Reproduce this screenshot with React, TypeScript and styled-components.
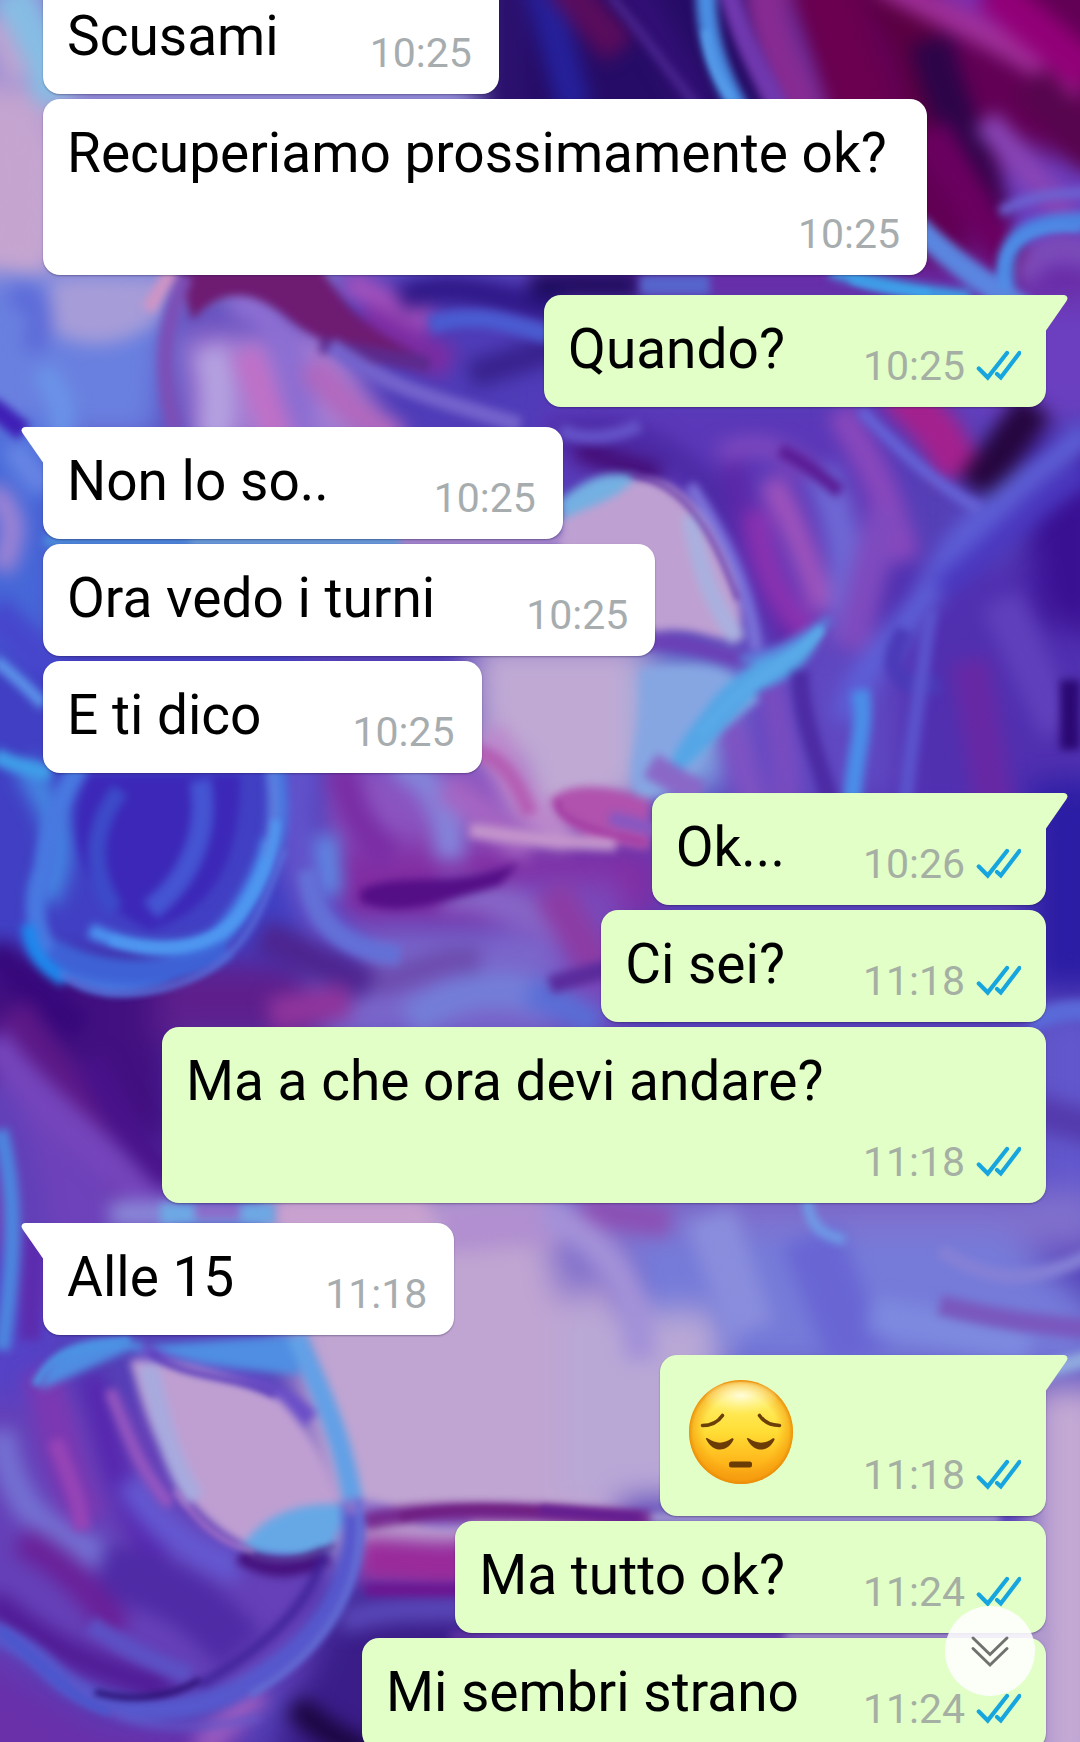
import React from 'react';
import styled, { createGlobalStyle, css } from 'styled-components';

const GlobalStyle = createGlobalStyle`
  *, *::before, *::after { box-sizing: border-box; }
  body {
    margin: 0;
    background: #4a35b5;
    font-family: Roboto, "Noto Sans", sans-serif;
  }
`;

const Screen = styled.main`
  position: relative;
  height: 100vh;
  overflow: hidden;
`;

const Wallpaper = styled.svg`
  position: absolute;
  inset: 0;
  width: 100%;
  height: 100%;
`;

/* The history is scrolled, so the first message is cut by the top edge. */
const History = styled.ol`
  position: relative;
  display: flex;
  flex-direction: column;
  gap: 5px;
  list-style: none;
  margin: -18px 0 0;
  padding: 0 34px 0 43px;
`;

const Row = styled.li<{ $mine?: boolean; $first?: boolean }>`
  display: flex;
  justify-content: ${(p) => (p.$mine ? 'flex-end' : 'flex-start')};
  margin-top: ${(p) => (p.$first ? 15 : 0)}px;
`;

const gaps = { tight: 64, normal: 78, wide: 91, wider: 105 };
type Gap = keyof typeof gaps;

const Bubble = styled.div<{ $mine?: boolean; $first?: boolean; $gap: Gap }>`
  position: relative;
  display: flex;
  flex-wrap: wrap;
  align-items: flex-end;
  gap: 16px ${(p) => gaps[p.$gap]}px;
  max-width: 884px;
  padding: 22px ${(p) => (p.$mine ? 25 : 27)}px 17px 24px;
  border-radius: 17px;
  background: ${(p) => (p.$mine ? '#e1ffc7' : '#ffffff')};
  color: ${(p) => (p.$mine ? '#e1ffc7' : '#ffffff')};
  box-shadow: 0 1px 2px rgba(20, 10, 50, 0.35);
  ${(p) =>
    p.$first &&
    (p.$mine
      ? css`
          border-top-right-radius: 0;
        `
      : css`
          border-top-left-radius: 0;
        `)}
`;

const Tail = styled.svg<{ $mine?: boolean }>`
  position: absolute;
  top: 0;
  ${(p) => (p.$mine ? 'right: -22px;' : 'left: -22px; transform: scaleX(-1);')}
  width: 23px;
  height: 36px;
`;

const Message = styled.p`
  margin: 0 0 9px;
  font-size: 55px;
  line-height: 64px;
  color: #000;
`;

const Emoji = styled.svg`
  display: block;
  width: 115px;
  height: 113px;
  margin-bottom: 9px;
`;

const Meta = styled.div`
  display: flex;
  align-items: center;
  gap: 11px;
  margin-left: auto;
`;

const Time = styled.time<{ $mine?: boolean }>`
  font-size: 41px;
  line-height: 48px;
  color: ${(p) => (p.$mine ? '#a5afa3' : '#a7adaf')};
`;

const Ticks = styled.svg`
  display: block;
  width: 45px;
  height: 32px;
`;

const ScrollDown = styled.button`
  position: absolute;
  right: 45px;
  bottom: 46px;
  display: flex;
  align-items: center;
  justify-content: center;
  width: 90px;
  height: 90px;
  padding: 0;
  border: 0;
  border-radius: 50%;
  background: rgba(255, 255, 255, 0.88);
  cursor: pointer;
`;

type Stroke = { d: string; c: string; w?: number };

const washes: Stroke[] = [
  { d: 'M-40 -40H560V300H-40Z', c: '#8e86d4' },
  { d: 'M-60 80H60V270H-60Z', c: '#c4a4d0' },
  { d: 'M480 -40H780V140H480Z', c: '#260c66' },
  { d: 'M790 -40H1120V280H900Z', c: '#620055' },
  { d: 'M1000 150L1120 160V420H960Z', c: '#6b3fc0' },
  { d: 'M-40 270H175L160 440H-40Z', c: '#6a80e0' },
  { d: 'M180 330H340L400 450H190Z', c: '#a57fd4' },
  { d: 'M330 260H560V440H380Z', c: '#4f3cb8' },
  { d: 'M540 260H1100V300H540Z', c: '#6b2aa4' },
  { d: 'M-40 430H60V700H-40Z', c: '#4668d8' },
  { d: 'M-40 650H300V960H-40Z', c: '#4140c4' },
  { d: 'M540 400H900V620H740L640 480H540Z', c: '#5b38b8' },
  { d: 'M860 560H1100V820H860Z', c: '#5130b0' },
  { d: 'M1010 440H1110V640L1040 620Z', c: '#3a1092' },
  { d: 'M740 640H900V800H700Z', c: '#6048c2' },
  { d: 'M470 640H650L640 800L560 830H480Z', c: '#c0aad4' },
  { d: 'M640 660H740L720 790H640Z', c: '#83a9e2' },
  { d: 'M330 760H520V850H330Z', c: '#8b54c0' },
  { d: 'M330 845H660V920H330Z', c: '#832da2' },
  { d: 'M500 880H620V1030H500Z', c: '#7a4bbc' },
  { d: 'M1030 780H1110V990H1030Z', c: '#2b1da4' },
  { d: 'M1030 1010H1110V1240H1030Z', c: '#6257cc' },
  { d: 'M-60 960H170L180 1150H40L-60 1040Z', c: '#421080' },
  { d: 'M160 960H300L330 1040H150Z', c: '#5e1f8c' },
  { d: 'M320 930H560V1040H320Z', c: '#7b68cc' },
  { d: 'M-40 1080L60 1080L180 1200V1250H-40Z', c: '#6e42ba' },
  { d: 'M-40 1250H60V1400H-40Z', c: '#5542c6' },
  { d: 'M260 1195H620V1560H330Z', c: '#c0a5d2' },
  { d: 'M540 1190H1100V1250H700L560 1300Z', c: '#8170cc' },
  { d: 'M640 1230H1000L1100 1310V1370H620Z', c: '#767bd9' },
  { d: 'M560 1310H720V1500H560Z', c: '#b9a8d6' },
  { d: 'M1030 1385H1110V1780H1030Z', c: '#c3a9d3' },
  { d: 'M-40 1400H150L250 1550L340 1560L300 1680L120 1700L-40 1640Z', c: '#6540b8' },
  { d: 'M-40 1640L100 1720L240 1730V1780H-40Z', c: '#6930aa' },
  { d: 'M340 1590H480V1780H260L300 1690Z', c: '#3a1d88' },
];

/* Wide, soft folds of ink. */
const folds: Stroke[] = [
  { d: 'M10 -10L60 100', c: '#86bde4', w: 44 },
  { d: 'M-10 20L20 80', c: '#bba3d2', w: 26 },
  { d: 'M0 110L50 150L44 270L-20 260', c: '#c5a5d0' },
  { d: 'M50 280C90 270 130 280 165 275L160 320C120 350 80 350 50 330Z', c: '#a69cd8' },
  { d: 'M10 300C40 290 50 320 30 350', c: '#5c6ad8', w: 24 },
  { d: 'M40 370C60 390 66 410 60 440', c: '#6a94e8', w: 24 },
  { d: 'M230 300C270 300 300 350 300 440', c: '#8c6ed2', w: 34 },
  { d: 'M210 350C220 380 220 400 215 440', c: '#b4a2e0', w: 30 },
  { d: 'M246 350L280 440', c: '#c070c6', w: 30 },
  { d: 'M310 365C340 400 360 420 400 440', c: '#b268bd', w: 30 },
  { d: 'M345 280L430 325', c: '#a352bc', w: 28 },
  { d: 'M360 318L450 365', c: '#7c2ca2', w: 34 },
  { d: 'M400 300C450 275 500 300 560 310', c: '#2d1684', w: 26 },
  { d: 'M470 375L580 340', c: '#37218c', w: 28 },
  { d: 'M515 -20V110', c: '#2c1170', w: 24 },
  { d: 'M540 -20L575 110', c: '#25209a', w: 34 },
  { d: 'M560 -20L620 50', c: '#5a0c5c', w: 38 },
  { d: 'M630 -20L700 110', c: '#310f74', w: 34 },
  { d: 'M765 -20C765 30 785 70 805 120', c: '#872b92', w: 46 },
  { d: 'M820 -20L865 120', c: '#6a004f', w: 62 },
  { d: 'M880 -20C920 30 930 70 935 130', c: '#5a0042', w: 50 },
  { d: 'M880 -20C950 20 1010 40 1080 92', c: '#a0309a', w: 26 },
  { d: 'M940 -20L1030 30', c: '#7e2fb0', w: 26 },
  { d: 'M990 -10L1090 75', c: '#920078', w: 42 },
  { d: 'M930 40C950 120 975 160 990 225', c: '#2d0448', w: 42 },
  { d: 'M930 130L1020 280', c: '#6a0060', w: 38 },
  { d: 'M985 120L1070 220', c: '#8945b6', w: 28 },
  { d: 'M1030 80L1100 160', c: '#57054e', w: 42 },
  { d: 'M530 285H640', c: '#1c0c5c', w: 26 },
  { d: 'M1020 280C1040 240 1060 245 1100 255', c: '#7d4cb8', w: 26 },
  { d: 'M10 445L46 490', c: '#6886e4', w: 28 },
  { d: 'M-10 490C14 510 20 530 0 570', c: '#a084d4', w: 24 },
  { d: 'M-10 610L50 670', c: '#4646cc', w: 40 },
  { d: 'M550 440C640 410 700 470 750 540', c: '#4d2ba6', w: 30 },
  { d: 'M575 450L660 476', c: '#430a70', w: 22 },
  { d: 'M730 450C745 540 770 600 795 660', c: '#5b28a8', w: 26 },
  { d: 'M755 510C765 580 785 610 815 640', c: '#8c32b0', w: 26 },
  { d: 'M770 480C795 520 805 560 825 610', c: '#a054bc', w: 26 },
  { d: 'M720 455C770 430 800 460 850 510', c: '#7c48be', w: 22 },
  { d: 'M840 410C870 460 890 500 905 560', c: '#8a48bc', w: 30 },
  { d: 'M820 470C850 540 850 580 845 640', c: '#6e68d4', w: 34 },
  { d: 'M885 510L850 650', c: '#7f4abe', w: 36 },
  { d: 'M895 385C925 420 945 430 960 475', c: '#a4218e', w: 46 },
  { d: 'M975 490L1035 405', c: '#26063e', w: 40 },
  { d: 'M1090 430C1030 480 960 520 930 590C900 640 860 660 845 720', c: '#5d5fd6', w: 28 },
  { d: 'M1090 470C1040 500 1000 540 940 590', c: '#4a38c0', w: 24 },
  { d: 'M770 680C780 740 790 770 785 810', c: '#7a4cc0', w: 28 },
  { d: 'M970 660L995 810', c: '#6828a4', w: 38 },
  { d: 'M1000 600L1060 730', c: '#6140bc', w: 40 },
  { d: 'M730 720L755 810', c: '#7f52c2', w: 30 },
  { d: 'M490 730C510 770 510 800 570 838', c: '#bd88cc', w: 30 },
  { d: 'M395 760C430 780 450 800 450 860', c: '#8484da', w: 30 },
  { d: 'M340 765C350 810 360 830 390 860', c: '#7a2da4', w: 32 },
  { d: 'M445 785L530 850', c: '#a565c2', w: 32 },
  { d: 'M25 765C60 820 70 850 45 900', c: '#4587e2', w: 26 },
  { d: 'M300 760C290 830 290 900 360 960', c: '#6152ca', w: 38 },
  { d: 'M326 835L332 895', c: '#5f8ce4', w: 22 },
  { d: 'M440 895C480 890 520 910 570 930', c: '#8665c6', w: 34 },
  { d: 'M370 985C420 975 440 955 480 960', c: '#6d4cae', w: 28 },
  { d: 'M410 1020C470 980 510 985 560 1005', c: '#737ed8', w: 34 },
  { d: 'M260 935L370 985', c: '#4d2590', w: 36 },
  { d: 'M270 1015L350 1000', c: '#8f349c', w: 34 },
  { d: 'M550 890L600 970', c: '#8c3ca4', w: 38 },
  { d: 'M530 990L600 1025', c: '#596ed6', w: 30 },
  { d: 'M-10 950L80 1030', c: '#36087a', w: 34 },
  { d: 'M10 1010C50 1080 90 1110 140 1200', c: '#5c1886', w: 44 },
  { d: 'M-10 1040C40 1110 100 1140 160 1220', c: '#7545bc', w: 36 },
  { d: 'M90 1060C120 1130 140 1150 175 1180', c: '#48128a', w: 30 },
  { d: 'M-10 1090C30 1160 40 1220 30 1310', c: '#6240b8', w: 32 },
  { d: 'M110 1214H175', c: '#8a8ad8', w: 26 },
  { d: 'M272 1214H430', c: '#cba2cf', w: 30 },
  { d: 'M440 1230L560 1220', c: '#b18fd0', w: 46 },
  { d: 'M580 1208L670 1222', c: '#8c50b4', w: 32 },
  { d: 'M545 1210C600 1240 640 1280 640 1360', c: '#a391d8', w: 32 },
  { d: 'M710 1215L750 1330', c: '#8a8ddc', w: 50 },
  { d: 'M810 1235L860 1360', c: '#6966d4', w: 60 },
  { d: 'M870 1315L1030 1345', c: '#7d8adf', w: 36 },
  { d: 'M1030 1110L1100 1130', c: '#543aac', w: 34 },
  { d: 'M40 1370C60 1420 60 1470 90 1520', c: '#7c38b2', w: 38 },
  { d: 'M90 1375C110 1440 110 1490 160 1560', c: '#5626ae', w: 26 },
  { d: 'M0 1430C10 1500 40 1540 120 1560', c: '#7470d2', w: 30 },
  { d: 'M130 1480C160 1530 190 1550 240 1570', c: '#6458d0', w: 32 },
  { d: 'M100 1570C150 1580 190 1590 240 1650', c: '#4f2ba6', w: 56 },
  { d: 'M20 1540C60 1560 80 1580 120 1630', c: '#6a2098', w: 30 },
  { d: 'M-10 1600C50 1650 100 1670 170 1690', c: '#501a94', w: 26 },
  { d: 'M360 1560C410 1560 440 1570 480 1560', c: '#9a2a9a', w: 44 },
  { d: 'M340 1622C390 1605 420 1610 480 1608', c: '#5a48b8', w: 26 },
  { d: 'M200 1750L260 1690', c: '#9a5cc0', w: 28 },
  { d: 'M295 1705C320 1730 340 1740 380 1760', c: '#1c0640', w: 26 },
];

/* Narrower ribbons that lie over the folds. */
const ribbons: Stroke[] = [
  { d: 'M148 310L172 270', c: '#d095c4', w: 14 },
  { d: 'M-10 405L24 432', c: '#3f1fb6', w: 20 },
  { d: 'M178 268H320C345 300 350 320 420 355C380 365 330 350 290 320C250 285 220 290 192 320Z', c: '#6e1b72' },
  { d: 'M185 275C170 320 155 350 175 430', c: '#7c4fb6', w: 16 },
  { d: 'M320 345L430 365', c: '#5c2a8c', w: 16 },
  { d: 'M330 345C390 390 440 400 520 425', c: '#7463cc', w: 16 },
  { d: 'M430 325C470 312 500 320 550 335', c: '#4a5bd0', w: 18 },
  { d: 'M610 -5C640 30 660 60 700 110', c: '#4b2790', w: 8 },
  { d: 'M706 -20C704 30 715 70 745 120', c: '#4a8ee2', w: 20 },
  { d: 'M726 -20C740 40 760 70 785 120', c: '#7038ae', w: 20 },
  { d: 'M1015 320C990 250 1010 215 1100 222', c: '#4b84e2', w: 18 },
  { d: 'M1000 212C1040 190 1060 195 1100 192', c: '#6b64d2', w: 10 },
  { d: 'M915 225C950 260 980 280 1025 310', c: '#5a86e0', w: 24 },
  { d: 'M830 270C880 285 920 292 970 298', c: '#3c9ee6', w: 14 },
  { d: 'M640 285H710', c: '#5566cc', w: 20 },
  { d: 'M-5 660C20 680 30 690 44 705', c: '#5c94ea', w: 12 },
  { d: 'M-5 755C10 765 30 768 50 774', c: '#3f9de8', w: 16 },
  { d: 'M44 541H190', c: '#4a90dc', w: 12 },
  { d: 'M190 541H400', c: '#6aa8dc', w: 12 },
  { d: 'M400 541H570', c: '#b08fcc', w: 12 },
  { d: 'M560 430C580 440 610 440 640 425', c: '#6452c8', w: 14 },
  { d: 'M560 520C600 480 640 470 670 485C710 510 745 580 742 642C710 640 690 625 655 632L560 560Z', c: '#bfa0d2' },
  { d: 'M560 500C590 475 610 470 636 476C620 500 590 505 562 520Z', c: '#74b0e2' },
  { d: 'M690 515C700 570 710 600 738 640', c: '#aab0de', w: 18 },
  { d: 'M690 485C720 530 752 590 756 650', c: '#7c74da', w: 12 },
  { d: 'M780 450C810 465 825 480 840 492', c: '#5a1c96', w: 14 },
  { d: 'M860 410C900 450 930 480 980 510', c: '#6562d6', w: 12 },
  { d: 'M640 670C700 660 740 670 760 700C720 730 690 760 690 790L640 800C620 780 640 740 640 700Z', c: '#86a6e2' },
  { d: 'M645 642C690 640 710 655 765 664', c: '#6b40b6', w: 16 },
  { d: 'M826 624C790 640 740 665 712 700C690 730 670 750 668 780C700 760 730 720 760 690C790 680 815 660 826 624Z', c: '#55a6e6' },
  { d: 'M740 660C780 655 800 635 830 620', c: '#5b82dc', w: 8 },
  { d: 'M800 670C800 720 820 760 832 810', c: '#4c2ba4', w: 18 },
  { d: 'M860 690C868 730 852 760 852 810', c: '#4a8ee8', w: 18 },
  { d: 'M905 630C880 670 900 690 940 685', c: '#4b3ab8', w: 18 },
  { d: 'M930 610C920 700 910 740 905 810', c: '#5b54cc', w: 14 },
  { d: 'M1070 680V750', c: '#2b0872', w: 20 },
  { d: 'M650 765L700 795', c: '#8a68c8', w: 26 },
  { d: 'M550 800C570 780 610 785 650 800V850C600 845 560 830 550 800Z', c: '#b052ae' },
  { d: 'M610 818L665 832', c: '#8658c2', w: 14 },
  { d: 'M470 830C520 838 560 842 616 844', c: '#c496cc', w: 14 },
  { d: 'M435 765C480 735 510 760 530 815', c: '#b45fb4', w: 16 },
  { d: 'M90 775C60 830 80 900 150 930C220 910 240 850 240 775Z', c: '#3c27b8' },
  { d: 'M82 760C60 800 50 820 44 870C20 930 50 975 110 985C190 985 240 930 270 850C280 830 280 800 274 760', c: '#4878e0', w: 20 },
  { d: 'M50 950C90 975 170 985 225 945', c: '#3e62d6', w: 26 },
  { d: 'M90 930C130 950 200 960 235 920C255 890 265 870 268 840', c: '#4b94f0', w: 14 },
  { d: 'M28 925C30 950 40 965 65 980', c: '#1d88ec', w: 14 },
  { d: 'M120 790C90 830 90 870 115 910', c: '#3c4ac8', w: 18 },
  { d: 'M200 780C210 830 190 880 150 910', c: '#4454d2', w: 22 },
  { d: 'M270 760C276 800 276 820 268 860', c: '#6080de', w: 8 },
  { d: 'M308 870C310 920 340 950 400 955', c: '#6370d6', w: 20 },
  { d: 'M360 890C400 870 450 890 520 862L500 885C450 900 400 920 360 902Z', c: '#540e86' },
  { d: 'M550 985L610 968', c: '#5a2b9c', w: 18 },
  { d: 'M0 1130C16 1190 16 1250 2 1350', c: '#4c86de', w: 16 },
  { d: 'M36 1230L30 1340', c: '#5c2cae', w: 20 },
  { d: 'M160 1214H275', c: '#6ea8e4', w: 22 },
  { d: 'M195 1212H240', c: '#8c6cca', w: 16 },
  { d: 'M807 1195C808 1225 820 1235 845 1240', c: '#6e9ee8', w: 10 },
  { d: 'M940 1250C1000 1290 1040 1280 1100 1250', c: '#8580d6', w: 14 },
  { d: 'M940 1305C1000 1320 1040 1325 1100 1330', c: '#7a58be', w: 20 },
  { d: 'M1040 1372L1100 1355', c: '#90aade', w: 16 },
  { d: 'M1030 1022C1060 1010 1070 1010 1100 1010', c: '#5a6ad8', w: 20 },
  { d: 'M640 1518H1000', c: '#a79fd2', w: 10 },
  { d: 'M40 1390C50 1340 100 1330 150 1345L290 1335L300 1375C230 1370 180 1360 130 1350Z', c: '#4f8ee2' },
  { d: 'M140 1352C200 1385 260 1370 310 1420', c: '#6a4ec8', w: 20 },
  { d: 'M130 1360C190 1360 240 1380 280 1400C310 1430 330 1470 338 1502C300 1510 270 1530 254 1548C220 1535 190 1505 170 1470C150 1430 140 1400 130 1360Z', c: '#bf9fd2' },
  { d: 'M148 1365C160 1420 170 1460 195 1500', c: '#a8aade', w: 20 },
  { d: 'M240 1550C260 1515 300 1500 350 1505L330 1550C300 1560 270 1555 240 1550Z', c: '#66a8e6' },
  { d: 'M55 1440C70 1480 80 1500 82 1530', c: '#9644b6', w: 16 },
  { d: 'M110 1390C130 1440 140 1470 170 1505', c: '#9656c0', w: 12 },
  { d: 'M90 1625C130 1650 150 1660 190 1675', c: '#5c50c4', w: 18 },
  { d: 'M240 1555C270 1572 290 1572 328 1556', c: '#46127e', w: 18 },
  { d: 'M325 1550C310 1610 260 1650 200 1685', c: '#3d2196', w: 8 },
  { d: 'M296 1335C320 1390 345 1440 355 1515', c: '#62a0e6', w: 20 },
  { d: 'M352 1500C360 1570 330 1630 270 1670C200 1725 100 1720 50 1670C30 1650 10 1640 -10 1630', c: '#5658cc', w: 22 },
  { d: 'M70 1680C110 1730 170 1735 260 1718', c: '#6256c8', w: 6 },
  { d: 'M345 1508C380 1500 420 1530 470 1520', c: '#8d72cc', w: 14 },
  { d: 'M365 1522C400 1512 470 1506 650 1520', c: '#762a90', w: 18 },
  { d: 'M365 1590L470 1590', c: '#6c1490', w: 12 },
  { d: 'M450 1636H785', c: '#6838a8', w: 8 },
  { d: 'M785 1636H1050', c: '#b5a0cc', w: 8 },
];

const highlights: Stroke[] = [
  { d: 'M705 30C708 60 718 80 732 100', c: '#5aa2ee', w: 6 },
  { d: 'M1005 290C996 250 1020 222 1080 228', c: '#4f8ee6', w: 6 },
  { d: 'M850 280C880 290 910 292 930 294', c: '#3eaaf0', w: 5 },
  { d: 'M630 474C690 485 715 540 738 600', c: '#6030a4', w: 4 },
  { d: 'M822 628C790 668 740 680 700 735', c: '#5aaae8', w: 8 },
  { d: 'M560 800C552 810 570 828 645 842', c: '#a23aa2', w: 5 },
  { d: 'M110 940C160 955 210 950 240 915C262 885 275 850 276 820', c: '#4f98f0', w: 8 },
  { d: 'M60 972C90 1000 150 1000 200 975C250 950 265 900 285 850', c: '#5a72dc', w: 5 },
  { d: 'M35 1385C55 1345 85 1350 130 1340', c: '#4c94e4', w: 8 },
  { d: 'M150 1352C180 1380 240 1375 275 1395', c: '#5a3cba', w: 6 },
  { d: 'M175 1490C195 1520 220 1545 254 1551', c: '#b880cc', w: 4 },
  { d: 'M250 1556C275 1566 310 1560 335 1545', c: '#5a3090', w: 4 },
  { d: 'M358 1500C368 1580 330 1650 250 1695', c: '#6470d6', w: 6 },
  { d: 'M95 1692C130 1702 170 1698 200 1680', c: '#2a0f70', w: 6 },
  { d: 'M400 1517C450 1506 500 1508 560 1512', c: '#6d1a7c', w: 6 },
  { d: 'M540 1510L640 1518', c: '#641e90', w: 10 },
  { d: 'M0 1630C40 1660 70 1700 110 1712', c: '#4a56cc', w: 8 },
];

const Layer = ({ items, filter }: { items: Stroke[]; filter: string }) => (
  <g filter={`url(#${filter})`} strokeLinejoin="round">
    {items.map((s, i) => (
      <path
        key={i}
        d={s.d}
        fill={s.w ? 'none' : s.c}
        stroke={s.w ? s.c : 'none'}
        strokeWidth={s.w}
      />
    ))}
  </g>
);

const blurs = { wash: 16, fold: 9, ribbon: 4, shine: 3 };

const InkWallpaper = () => (
  <Wallpaper viewBox="0 0 1080 1742" preserveAspectRatio="xMidYMid slice" aria-hidden="true">
    <defs>
      {Object.entries(blurs).map(([id, deviation]) => (
        <filter
          key={id}
          id={id}
          filterUnits="userSpaceOnUse"
          x="-60"
          y="-60"
          width="1200"
          height="1862"
          colorInterpolationFilters="sRGB"
        >
          <feGaussianBlur stdDeviation={deviation} />
        </filter>
      ))}
    </defs>
    <rect width="1080" height="1742" fill="#5540b8" />
    <Layer items={washes} filter="wash" />
    <Layer items={folds} filter="fold" />
    <Layer items={ribbons} filter="ribbon" />
    <Layer items={highlights} filter="shine" />
  </Wallpaper>
);

const ReadTicks = () => (
  <Ticks viewBox="0 0 45 32" role="img" aria-label="Letto" fill="none" stroke="#17a5e0" strokeWidth="4.2" strokeLinecap="round">
    <path d="M2.8 18.6L11.7 27.500L31 3" strokeLinejoin="miter" />
    <path d="M21 24L24.8 27.500L43.4 3" strokeLinejoin="miter" />
  </Ticks>
);

const PensiveFace = () => (
  <Emoji viewBox="-1 0 115 113" role="img" aria-label="Faccina pensierosa">
    <defs>
      <linearGradient id="skin" x1="0" y1="0" x2="0" y2="1">
        <stop offset="0" stopColor="#fff3a0" />
        <stop offset="0.22" stopColor="#ffee62" />
        <stop offset="0.5" stopColor="#ffdd35" />
        <stop offset="0.78" stopColor="#ffb81c" />
        <stop offset="1" stopColor="#f69a10" />
      </linearGradient>
      <radialGradient id="rim" cx="0.5" cy="0.5" r="0.5">
        <stop offset="0.7" stopColor="#f39a0c" stopOpacity="0" />
        <stop offset="0.92" stopColor="#f39a0c" stopOpacity="0.55" />
        <stop offset="1" stopColor="#e88a08" stopOpacity="0.95" />
      </radialGradient>
      <radialGradient id="gloss" cx="0.5" cy="0.4" r="0.55">
        <stop offset="0" stopColor="#fffde0" stopOpacity="0.95" />
        <stop offset="1" stopColor="#fff6a0" stopOpacity="0" />
      </radialGradient>
    </defs>
    <circle cx="56" cy="55" r="52" fill="url(#skin)" />
    <circle cx="56" cy="55" r="52" fill="url(#rim)" />
    <ellipse cx="56" cy="22" rx="36" ry="17" fill="url(#gloss)" />
    <g fill="none" stroke="#6b4008" strokeWidth="3.6" strokeLinecap="round">
      <path d="M17.500 48.500C26 48.500 33 45 37.500 38.500" />
      <path d="M94.500 48.500C86 48.500 79 45 74.500 38.500" />
    </g>
    <g fill="#6b3c06">
      <path d="M21 62C20.500 61 22 60.500 23 61.500C31 67 39 67 46.500 61.500C47.500 60.700 49 61.500 48.500 62.800C45 70 40 72.500 35 72.500C30 72.500 25 70 21 62Z" />
      <path d="M62 62C61.500 61 63 60.500 64 61.500C72 67 80 67 87.500 61.500C88.500 60.700 90 61.500 89.500 62.800C86 70 81 72.500 76 72.500C71 72.500 66 70 62 62Z" />
      <rect x="44" y="84.500" width="23" height="6" rx="2.500" />
    </g>
  </Emoji>
);

type Item = {
  text?: string;
  time: string;
  mine?: boolean;
  first?: boolean;
  gap?: Gap;
};

const messages: Item[] = [
  { text: 'Scusami', time: '10:25', gap: 'wide' },
  { text: 'Recuperiamo prossimamente ok?', time: '10:25', gap: 'wide' },
  { text: 'Quando?', time: '10:25', mine: true, first: true },
  { text: 'Non lo so..', time: '10:25', first: true, gap: 'wider' },
  { text: 'Ora vedo i turni', time: '10:25', gap: 'wide' },
  { text: 'E ti dico', time: '10:25', gap: 'wide' },
  { text: 'Ok...', time: '10:26', mine: true, first: true },
  { text: 'Ci sei?', time: '11:18', mine: true },
  { text: 'Ma a che ora devi andare?', time: '11:18', mine: true },
  { text: 'Alle 15', time: '11:18', first: true, gap: 'wide' },
  { time: '11:18', mine: true, first: true, gap: 'tight' },
  { text: 'Ma tutto ok?', time: '11:24', mine: true },
  { text: 'Mi sembri strano', time: '11:24', mine: true, gap: 'tight' },
];

export default function App() {
  return (
    <>
      <GlobalStyle />
      <Screen>
        <InkWallpaper />
        <History>
          {messages.map((m, i) => (
            <Row key={i} $mine={m.mine} $first={m.first}>
              <Bubble $mine={m.mine} $first={m.first} $gap={m.gap ?? 'normal'}>
                {m.first && (
                  <Tail $mine={m.mine} viewBox="0 0 23 36" aria-hidden="true">
                    <path d="M0 0H18.500C22 0 23.500 3 21.500 6L1 35.500H0Z" fill="currentColor" />
                  </Tail>
                )}
                {m.text ? <Message>{m.text}</Message> : <PensiveFace />}
                <Meta>
                  <Time $mine={m.mine}>{m.time}</Time>
                  {m.mine && <ReadTicks />}
                </Meta>
              </Bubble>
            </Row>
          ))}
        </History>
        <ScrollDown type="button" aria-label="Vai agli ultimi messaggi">
          <svg width="40" height="34" viewBox="0 0 40 34" fill="none" stroke="#707270" strokeWidth="3" strokeLinecap="round" aria-hidden="true">
            <path d="M3 4L20 20.500L37 4" />
            <path d="M3 14.500L20 31L37 14.500" />
          </svg>
        </ScrollDown>
      </Screen>
    </>
  );
}
